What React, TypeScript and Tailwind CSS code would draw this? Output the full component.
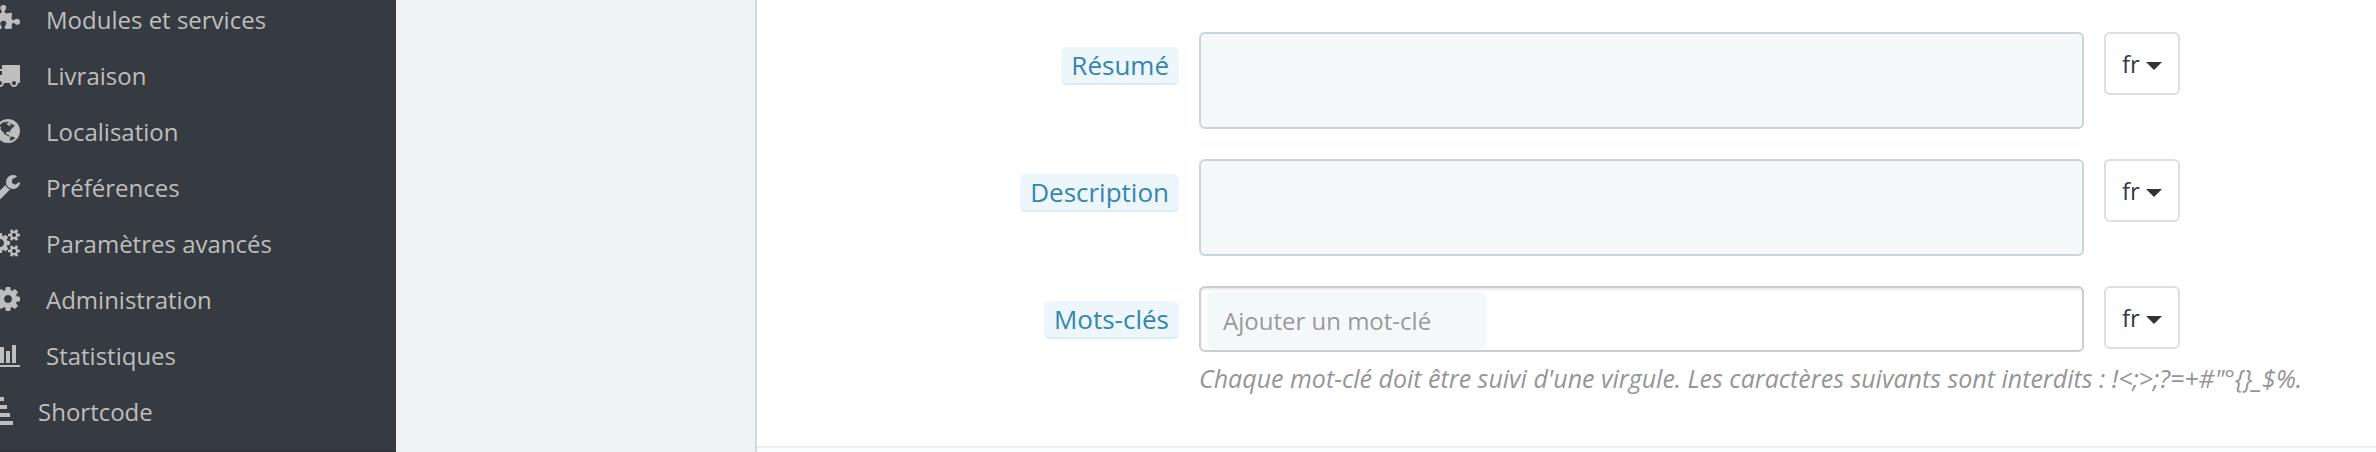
import { useState } from "react";
import type { ReactNode } from "react";

type IconProps = { viewBox: string; className: string; children: ReactNode };

const MenuIcon = ({ viewBox, className, children }: IconProps) => (
  <svg viewBox={viewBox} fill="currentColor" aria-hidden="true" className={`h-7 shrink-0 ${className}`}>
    {children}
  </svg>
);

const PuzzleIcon = () => (
  <MenuIcon viewBox="64 0 1691 1792" className="w-[26px]">
    <path d="M1755 1083q0 81-44.5 135t-123.5 54q-41 0-77.5-17.5t-59-38-56.5-38-71-17.5q-110 0-110 124 0 39 16 115t15 115v5q-22 0-33 1-34 3-97.5 11.5t-115.5 13.5-98 5q-61 0-103-26.5t-42-83.5q0-37 17.5-71t38-56.5 38-59 17.5-77.5q0-79-54-123.5t-135-44.5q-84 0-143 45.5t-59 127.5q0 43 15 83t33.5 64.5 33.5 53 15 50.5q0 45-46 89-37 35-117 35-95 0-245-24-9-2-27.5-4t-27.5-4l-13-2q-1 0-3-1-2 0-2-1v-1024q2 1 17.5 3.5t34 5 21.5 3.5q150 24 245 24 80 0 117-35 46-44 46-89 0-22-15-50.5t-33.5-53-33.5-64.5-15-83q0-82 59-127.5t144-45.5q80 0 134 44.5t54 123.5q0 41-17.5 77.5t-38 59-38 56.5-17.5 71q0 57 42 83.5t103 26.5q64 0 180-15t163-17v2q-1 2-3.5 17.5t-5 34-3.5 21.5q-24 150-24 245 0 80 35 117 44 46 89 46 22 0 50.5-15t53-33.5 64.5-33.5 83-15q82 0 127.5 59t45.5 143z" />
  </MenuIcon>
);

const TruckIcon = () => (
  <MenuIcon viewBox="0 0 1792 1792" className="w-7">
    <path d="M640 1408q0-52-38-90t-90-38-90 38-38 90 38 90 90 38 90-38 38-90zm-384-512h384v-256h-158q-13 0-22 9l-195 195q-9 9-9 22v30zm1280 512q0-52-38-90t-90-38-90 38-38 90 38 90 90 38 90-38 38-90zm256-1088v1024q0 15-4 26.5t-13.5 18.5-16.5 11.5-23.5 6-22.5 2-25.5 0-22.5-.5q0 106-75 181t-181 75-181-75-75-181h-384q0 106-75 181t-181 75-181-75-75-181h-64q-3 0-22.5.5t-25.5 0-22.5-2-23.5-6-16.5-11.5-13.5-18.5-4-26.5q0-26 19-45t45-19v-320q0-8-.5-35t0-38 2.5-34.5 6.5-37 14-30.5 22.5-30l198-198q19-19 50.5-32t58.5-13h160v-192q0-26 19-45t45-19h1024q26 0 45 19t19 45z" />
  </MenuIcon>
);

const GlobeIcon = () => (
  <MenuIcon viewBox="128 0 1536 1792" className="w-6">
    <path d="M896 128q209 0 385.5 103t279.5 279.5 103 385.5-103 385.5-279.5 279.5-385.5 103-385.5-103-279.5-279.5-103-385.5 103-385.5 279.5-279.5 385.5-103zm274 521q-2 1-9.5 9.5t-13.5 9.5q2 0 4.5-5t5-11 3.5-7q6-7 22-15 14-6 52-12 34-8 51 11-2-2 9.5-13t14.5-12q3-2 15-4.5t15-7.5l2-22q-12 1-17.5-7t-6.5-21q0 2-6 8 0-7-4.5-8t-11.5 1-9 1q-10-3-15-7.5t-8-16.5-4-15q-2-5-9.5-11t-9.5-10q-1-2-2.5-5.5t-3-6.5-4-5.5-5.5-2.5-7 5-7.5 10-4.5 5q-3-2-6-1.5t-4.5 1-4.5 3-5 3.5q-3 2-8.5 3t-8.5 2q15-5-1-11-10-4-16-3 9-4 7.5-12t-8.5-14h5q-1-4-8.5-8.5t-17.5-8.5-13-6q-8-5-34-9.5t-33-.5q-5 6-4.5 10.5t4 14 3.5 12.5q1 6-5.5 13t-6.5 12q0 7 14 15.5t10 21.5q-3 8-16 16t-16 12q-5 8-1.5 18.5t10.5 16.5q2 2 1.5 4t-3.5 4.5-5.5 4-6.5 3.5l-3 2q-11 5-20.5-6t-13.5-26q-7-25-16-30-23-8-29 1-5-13-41-26-25-9-58-4 6-1 0-15-7-15-19-12 3-6 4-17.5t1-13.5q3-13 12-23 1-1 7-8.5t9.5-13.5.5-6q35 4 50-11 5-5 11.5-17t10.5-17q9-6 14-5.5t14.5 5.5 14.5 5q14 1 15.5-11t-7.5-20q12 1 3-17-4-7-8-9-12-4-27 5-8 4 2 8-1-1-9.5 10.5t-16.5 17.5-16-5q-1-1-5.5-13.5t-9.5-13.5q-8 0-16 15 3-8-11-15t-24-8q19-12-8-27-7-4-20.5-5t-19.5 4q-5 7-5.5 11.5t5 8 10.5 5.5 11.5 4 8.5 3q14 10 8 14-2 1-8.5 3.5t-11.5 4.5-6 4q-3 4 0 14t-2 14q-5-5-9-17.5t-7-16.5q7 9-25 6l-10-1q-4 0-16 2t-20.5 1-13.5-8q-4-8 0-20 1-4 4-2-4-3-11-9.5t-10-8.5q-46 15-94 41 6 1 12-1 5-2 13-6.5t10-5.5q34-14 42-7l5-5q14 16 20 25-7-4-30-1-20 6-22 12 7 12 5 18-4-3-11.5-10t-14.5-11-15-5q-16 0-22 1-146 80-235 222 7 7 12 8 4 1 5 9t2.5 11 11.5-3q9 8 3 19 1-1 44 27 19 17 21 21 3 11-10 18-1-2-9-9t-9-4q-3 5 .5 18.5t10.5 12.5q-7 0-9.5 16t-2.5 35.5-1 23.5l2 1q-3 12 5.5 34.5t21.5 19.5q-13 3 20 43 6 8 8 9 3 2 12 7.5t15 10 10 10.5q4 5 10 22.5t14 23.5q-2 6 9.5 20t10.5 23q-1 0-2.5 1t-2.5 1q3 7 15.5 14t15.5 13q1 3 2 10t3 11 8 2q2-20-24-62-15-25-17-29-3-5-5.5-15.5t-4.5-14.5q2 0 6 1.5t8.5 3.5 7.5 4 2 3q-3 7 2 17.5t12 18.5 17 19 12 13q6 6 14 19.5t0 13.5q9 0 20 10t17 20q5 8 8 26t5 24q2 7 8.5 13.5t12.5 9.5l16 8 13 7q5 2 18.5 10.5t21.5 11.5q10 4 16 4t14.5-2.5 13.5-3.5q15-2 29 15t21 21q36 19 55 11-2 1 .5 7.5t8 15.5 9 14.5 5.5 8.5q5 6 18 15t18 15q6-4 7-9-3 8 7 20t18 10q14-3 14-32-31 15-49-18 0-1-2.5-5.5t-4-8.5-2.5-8.5 0-7.5 5-3q9 0 10-3.5t-2-12.5-4-13q-1-8-11-20t-12-15q-5 9-16 8t-16-9q0 1-1.5 5.5t-1.5 6.5q-13 0-15-1 1-3 2.5-17.5t3.5-22.5q1-4 5.5-12t7.5-14.5 4-12.5-4.5-9.5-17.5-2.5q-19 1-26 20-1 3-3 10.5t-5 11.5-9 7q-7 3-24 2t-24-5q-13-8-22.5-29t-9.5-37q0-10 2.5-26.5t3-25-5.5-24.5q3-2 9-9.5t10-10.5q2-1 4.5-1.5t4.5 0 4-1.5 3-6q-1-1-4-3-3-3-4-3 7 3 28.5-1.5t27.5 1.5q15 11 22-2 0-1-2.5-9.5t-.5-13.5q5 27 29 9 3 3 15.5 5t17.5 5q3 2 7 5.5t5.5 4.5 5-.5 8.5-6.5q10 14 12 24 11 40 19 44 7 3 11 2t4.5-9.5 0-14-1.5-12.5l-1-8v-18l-1-8q-15-3-18.5-12t1.5-18.5 15-18.5q1-1 8-3.5t15.5-6.5 12.5-8q21-19 15-35 7 0 11-9-1 0-5-3t-7.5-5-4.5-2q9-5 2-16 5-3 7.5-11t7.5-10q9 12 21 2 7-8 1-16 5-7 20.5-10.5t18.5-9.5q7 2 8-2t1-12 3-12q4-5 15-9t13-5l17-11q3-4 0-4 18 2 31-11 10-11-6-20 3-6-3-9.5t-15-5.5q3-1 11.5-.5t10.5-1.5q15-10-7-16-17-5-43 12zm-163 877q206-36 351-189-3-3-12.5-4.5t-12.5-3.5q-18-7-24-8 1-7-2.5-13t-8-9-12.5-8-11-7q-2-2-7-6t-7-5.5-7.5-4.5-8.5-2-10 1l-3 1q-3 1-5.5 2.5t-5.5 3-4 3 0 2.5q-21-17-36-22-5-1-11-5.5t-10.5-7-10-1.5-11.5 7q-5 5-6 15t-2 13q-7-5 0-17.5t2-18.5q-3-6-10.5-4.5t-12 4.5-11.5 8.5-9 6.5-8.5 5.5-8.5 7.5q-3 4-6 12t-5 11q-2-4-11.5-6.5t-9.5-5.5q2 10 4 35t5 38q7 31-12 48-27 25-29 40-4 22 12 26 0 7-8 20.5t-7 21.5q0 6 2 16z" />
  </MenuIcon>
);

const WrenchIcon = () => (
  <MenuIcon viewBox="0 0 1728 1792" className="w-[27px]">
    <path d="M448 1472q0-26-19-45t-45-19-45 19-19 45 19 45 45 19 45-19 19-45zm644-420l-682 682q-37 37-90 37-52 0-91-37l-106-108q-38-36-38-90 0-53 38-91l681-681q39 98 114.5 173.5t173.5 114.5zm634-435q0 39-23 106-47 134-164.5 217.5t-258.5 83.5q-185 0-316.5-131.5t-131.5-316.5 131.5-316.5 316.5-131.5q58 0 121.5 16.5t107.5 46.5q16 11 16 28t-16 28l-293 169v224l193 107q5-3 79-48.5t135.5-81 70.5-35.5q15 0 23.5 10t8.5 25z" />
  </MenuIcon>
);

const CogsIcon = () => (
  <MenuIcon viewBox="0 0 1920 1792" className="w-[30px]">
    <path d="M896 896q0-106-75-181t-181-75-181 75-75 181 75 181 181 75 181-75 75-181zm768 512q0-52-38-90t-90-38-90 38-38 90q0 53 37.5 90.5t90.5 37.5 90.5-37.5 37.5-90.5zm0-1024q0-52-38-90t-90-38-90 38-38 90q0 53 37.5 90.5t90.5 37.5 90.5-37.5 37.5-90.5zm-384 421v185q0 10-7 19.5t-16 10.5l-155 24q-11 35-32 76 34 48 90 115 7 11 7 20 0 12-7 19-23 30-82.5 89.5t-78.5 59.5q-11 0-21-7l-115-90q-37 19-77 31-11 108-23 155-7 24-30 24h-186q-11 0-20-7.5t-10-17.5l-23-153q-34-10-75-31l-118 89q-7 7-20 7-11 0-21-8-144-133-144-160 0-9 7-19 10-14 41-53t47-61q-23-44-35-82l-152-24q-10-1-17-9.5t-7-19.5v-185q0-10 7-19.5t16-10.5l155-24q11-35 32-76-34-48-90-115-7-11-7-20 0-12 7-20 22-30 82-89t79-59q11 0 21 7l115 90q34-18 77-32 11-108 23-154 7-24 30-24h186q11 0 20 7.5t10 17.5l23 153q34 10 75 31l118-89q8-7 20-7 11 0 21 8 144 133 144 160 0 8-7 19-12 16-42 54t-45 60q23 48 34 82l152 23q10 2 17 10.5t7 19.5zm640 533v140q0 16-149 31-12 27-30 52 51 113 51 138 0 4-4 7-122 71-124 71-8 0-46-47t-52-68q-20 2-30 2t-30-2q-14 21-52 68t-46 47q-2 0-124-71-4-3-4-7 0-25 51-138-18-25-30-52-149-15-149-31v-140q0-16 149-31 13-29 30-52-51-113-51-138 0-4 4-7 4-2 35-20t59-34 30-16q8 0 46 46.5t52 67.5q20-2 30-2t30 2q51-71 92-112l6-2q4 0 124 70 4 3 4 7 0 25-51 138 17 23 30 52 149 15 149 31zm0-1024v140q0 16-149 31-12 27-30 52 51 113 51 138 0 4-4 7-122 71-124 71-8 0-46-47t-52-68q-20 2-30 2t-30-2q-14 21-52 68t-46 47q-2 0-124-71-4-3-4-7 0-25 51-138-18-25-30-52-149-15-149-31v-140q0-16 149-31 13-29 30-52-51-113-51-138 0-4 4-7 4-2 35-20t59-34 30-16q8 0 46 46.5t52 67.5q20-2 30-2t30 2q51-71 92-112l6-2q4 0 124 70 4 3 4 7 0 25-51 138 17 23 30 52 149 15 149 31z" />
  </MenuIcon>
);

const CogIcon = () => (
  <MenuIcon viewBox="128 0 1536 1792" className="w-6">
    <path d="M1152 896q0-106-75-181t-181-75-181 75-75 181 75 181 181 75 181-75 75-181zm512-109v222q0 12-8 23t-20 13l-185 28q-19 54-39 91 35 50 107 138 10 12 10 25t-9 23q-27 37-99 108t-94 71q-12 0-26-9l-138-108q-44 23-91 38-16 136-29 186-7 28-36 28h-222q-14 0-24.5-8.5t-11.5-21.5l-28-184q-49-16-90-37l-141 107q-10 9-25 9-14 0-25-11-126-114-165-168-7-10-7-23 0-12 8-23 15-21 51-66.5t54-70.5q-27-50-41-99l-183-27q-13-2-21-12.5t-8-23.5v-222q0-12 8-23t19-13l186-28q14-46 39-92-40-57-107-138-10-12-10-24 0-10 9-23 26-36 98.5-107.5t94.5-71.5q13 0 26 10l138 107q44-23 91-38 16-136 29-186 7-28 36-28h222q14 0 24.5 8.5t11.5 21.5l28 184q49 16 90 37l142-107q9-9 24-9 13 0 25 10 129 119 165 170 7 8 7 22 0 12-8 23-15 21-51 66.5t-54 70.5q26 50 41 98l183 28q13 2 21 12.5t8 23.5z" />
  </MenuIcon>
);

const ChartIcon = () => (
  <MenuIcon viewBox="0 0 32 28" className="w-8">
    <path d="M0 4h2v20h30v2H0zM6 16h4v6H6zM12 6h4v16h-4zM18 10h4v12h-4zM24 4h4v18h-4z" />
  </MenuIcon>
);

const StepsIcon = () => (
  <MenuIcon viewBox="0 0 28 28" className="w-7">
    <path d="M0 0h12v4H0zM0 8h15v4H0zM0 16h18v4H0zM0 24h21v4H0z" />
  </MenuIcon>
);

const menuItems = [
  { label: "Modules et services", icon: PuzzleIcon },
  { label: "Livraison", icon: TruckIcon },
  { label: "Localisation", icon: GlobeIcon },
  { label: "Préférences", icon: WrenchIcon },
  { label: "Paramètres avancés", icon: CogsIcon },
  { label: "Administration", icon: CogIcon },
  { label: "Statistiques", icon: ChartIcon },
  { label: "Shortcode", icon: StepsIcon, compact: true },
];

const Sidebar = () => (
  <nav className="w-[396px] shrink-0 overflow-hidden border-b-2 border-[#2f3238] bg-[#363a41]">
    {/* the list is scrolled a little past its first row */}
    <ul className="-mt-[9px]">
      {menuItems.map((item) => (
        <li key={item.label}>
          <a
            href="#"
            className={`flex h-14 items-center text-2xl text-[#bebebe] ${
              item.compact ? "gap-[18px]" : "gap-[26px]"
            }`}
          >
            <span className="flex w-5 justify-end">
              <item.icon />
            </span>
            <span className="pt-0.5">{item.label}</span>
          </a>
        </li>
      ))}
    </ul>
  </nav>
);

const FieldLabel = ({ htmlFor, children }: { htmlFor: string; children: ReactNode }) => (
  <div className="flex items-start justify-end pt-[15px]">
    <label
      htmlFor={htmlFor}
      className="rounded-md border-b-2 border-[#d8edf7] bg-[#edf7fb] px-2.5 text-[26px] leading-9 text-[#3586ae]"
    >
      {children}
    </label>
  </div>
);

const LangButton = () => (
  <div>
    <button
      type="button"
      className="flex h-[63px] w-[76px] items-center justify-center gap-1.5 rounded-md border-2 border-[#dedede] bg-white text-2xl text-[#363a41]"
    >
      fr
      <svg viewBox="0 0 16 8" aria-hidden="true" className="mt-1 h-2 w-4 fill-[#333]">
        <path d="M0 0h16L8 8z" />
      </svg>
    </button>
  </div>
);

const rowClass = "grid grid-cols-[422fr_885fr_272fr] gap-x-5";

const TextareaRow = ({ id, label }: { id: string; label: string }) => (
  <div className={rowClass}>
    <FieldLabel htmlFor={id}>{label}</FieldLabel>
    <textarea
      id={id}
      className="h-[97px] w-full resize-none rounded-md border-2 border-[#c7d6db] bg-[#f5f8f9] px-4 py-3 text-2xl text-[#555] outline-none"
    />
    <LangButton />
  </div>
);

const KeywordsRow = () => {
  const [keyword, setKeyword] = useState("");

  return (
    <div className={rowClass}>
      <FieldLabel htmlFor="keywords">Mots-clés</FieldLabel>
      <div className="rounded-md border-2 border-[#ccc] bg-white px-1.5 py-1 pb-px shadow-[inset_0_2px_2px_rgba(0,0,0,0.075)]">
        <input
          id="keywords"
          type="text"
          value={keyword}
          onChange={(e) => setKeyword(e.target.value)}
          placeholder="Ajouter un mot-clé"
          className="block h-[57px] w-[280px] rounded-md bg-[#f5f8f9] px-4 text-2xl text-[#555] outline-none placeholder:text-[#999]"
        />
      </div>
      <LangButton />
      <p className="col-span-2 col-start-2 pt-2.5 text-[25px] leading-8 font-medium text-[#959595] italic">
        {"Chaque mot-clé doit être suivi d'une virgule. Les caractères suivants sont interdits : !<;>;?=+#\"°{}_$%."}
      </p>
    </div>
  );
};

export default function App() {
  return (
    <div className="flex min-h-screen bg-[#eff1f2] font-['Open_Sans','Noto_Sans',sans-serif]">
      <Sidebar />
      <main className="flex flex-1 pl-[359px]">
        <div className="flex flex-1 flex-col border-l-2 border-[#d3d8db] bg-white">
          <form className="flex flex-1 flex-col gap-[30px] pt-8">
            <TextareaRow id="summary" label="Résumé" />
            <TextareaRow id="description" label="Description" />
            <KeywordsRow />
          </form>
          <footer className="h-1.5 border-t-2 border-[#eee] bg-[#fcfdfe]" />
        </div>
      </main>
    </div>
  );
}
